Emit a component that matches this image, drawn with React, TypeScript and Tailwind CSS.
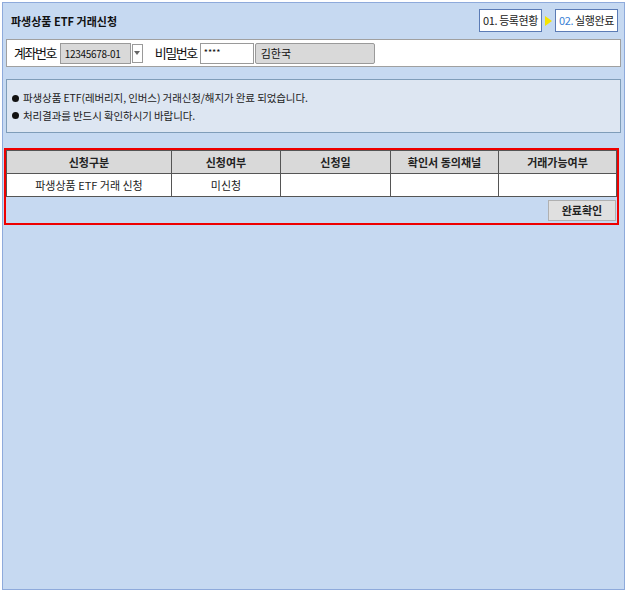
import React from "react";

const font = { fontFamily: '"Noto Sans CJK KR", "Noto Sans", sans-serif' };

const cols = [
  { label: "신청구분", w: "w-[164px]", value: "파생상품 ETF 거래 신청" },
  { label: "신청여부", w: "w-[109px]", value: "미신청" },
  { label: "신청일", w: "w-[110px]", value: "" },
  { label: "확인서 동의채널", w: "w-[108px]", value: "" },
  { label: "거래가능여부", w: "flex-1", value: "" },
];

export default function App() {
  return (
    <div className="h-[591px] w-[627px] bg-white p-[2px]" style={font}>
      <div className="flex h-[588px] w-[623px] flex-col border border-[#8eaadb] bg-[#c6d9f1]">
        {/* title + steps */}
        <div className="flex h-[36px] items-start justify-between pl-[8px] pr-[6px] pt-[6px]">
          <h1 className="mt-[4px] text-[11px] font-bold tracking-[0px] text-[#111]">파생상품 ETF 거래신청</h1>
          <div className="flex items-center">
            <div className="flex h-[23px] items-center border border-[#5b7bb5] bg-white px-[3px] text-[11px] tracking-[-0.4px] text-[#222]">01. 등록현황</div>
            <span className="mx-[3px] h-0 w-0 border-y-[5px] border-l-[7px] border-y-transparent border-l-[#f5e400]" />
            <div className="flex h-[23px] items-center border border-[#5b7bb5] bg-white px-[3px] text-[11px] tracking-[-0.4px] text-[#222]">
              <span className="mr-[2px] text-[#3a7fd5]">02.</span>실행완료
            </div>
          </div>
        </div>

        {/* account row */}
        <div className="mx-[3px] flex h-[28px] items-center border border-[#a0a0a0] bg-white pl-[7px]">
          <span className="text-[13px] tracking-[-1.5px] text-[#111]">계좌번호</span>
          <div className="ml-[4px] flex h-[21px] w-[71px] items-center border border-[#9a9a9a] bg-[#d9d9d9] pl-[4px] text-[10px] tracking-[-0.3px] text-[#111]">12345678-01</div>
          <div className="ml-[1px] flex h-[19px] w-[11px] items-center justify-center border border-[#9a9a9a] bg-white">
            <span className="h-0 w-0 border-x-[3px] border-t-[4px] border-x-transparent border-t-[#666]" />
          </div>
          <span className="ml-[12px] text-[13px] tracking-[-1.5px] text-[#111]">비밀번호</span>
          <div className="ml-[3px] flex h-[21px] w-[54px] items-center border border-[#9a9a9a] bg-white pl-[3px] text-[9px] text-[#111]">****</div>
          <div className="ml-[1px] flex h-[21px] w-[120px] items-center rounded-[2px] border border-[#9a9a9a] bg-[#d9d9d9] pl-[5px] text-[11px] text-[#111]">김한국</div>
        </div>

        {/* info box */}
        <div className="mx-[3px] mt-[12px] flex h-[54px] flex-col justify-center gap-[2px] border border-[#7f9db9] bg-[#dde6f2] pl-[5px] pt-[2px] text-[10.5px] tracking-[-0.1px] text-[#222]">
          <p className="flex items-center gap-[4px]">
            <span className="h-[7px] w-[7px] rounded-full bg-[#111]" />
            파생상품 ETF(레버리지, 인버스) 거래신청/해지가 완료 되었습니다.
          </p>
          <p className="flex items-center gap-[4px]">
            <span className="h-[7px] w-[7px] rounded-full bg-[#111]" />
            처리결과를 반드시 확인하시기 바랍니다.
          </p>
        </div>

        {/* table area */}
        <div className="ml-[1px] mr-[5px] mt-[15px] flex h-[77px] flex-col border-2 border-[#ee0000]">
          <div className="flex h-[24px] border border-[#555] bg-[#d9d9d9] text-[11px] font-bold text-[#222]">
            {cols.map((c, i) => (
              <div key={c.label} className={`${c.w} flex items-center justify-center ${i > 0 ? "border-l border-[#555]" : ""}`}>
                {c.label}
              </div>
            ))}
          </div>
          <div className="flex h-[23px] border-x border-b border-[#555] bg-white text-[11px] text-[#222]">
            {cols.map((c, i) => (
              <div key={c.label} className={`${c.w} flex items-center justify-center ${i > 0 ? "border-l border-[#555]" : ""}`}>
                {c.value}
              </div>
            ))}
          </div>
          <div className="flex flex-1 items-center justify-end pr-[1px]">
            <button className="h-[21px] w-[68px] border border-[#b0b0b0] bg-[#e0e0e0] text-[11px] font-bold text-[#222]">완료확인</button>
          </div>
        </div>
      </div>
    </div>
  );
}
